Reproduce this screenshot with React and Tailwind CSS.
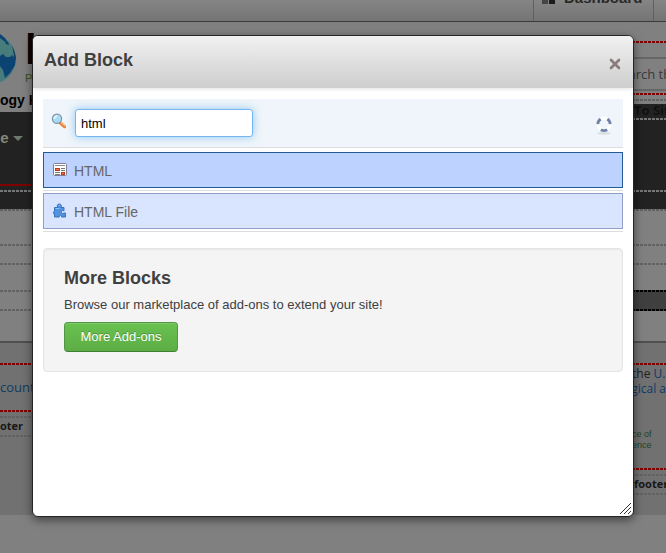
import React, { useState } from "react";

const dashes = {
  red: "h-0.5 shrink-0 bg-[repeating-linear-gradient(90deg,#800000_0_3px,transparent_3px_4px)]",
  gray: "h-0.5 shrink-0 bg-[repeating-linear-gradient(90deg,#626262_0_3px,transparent_3px_4px)]",
  light: "h-0.5 shrink-0 bg-[repeating-linear-gradient(90deg,#777777_0_3px,transparent_3px_4px)]",
  black: "h-0.5 shrink-0 bg-[repeating-linear-gradient(90deg,#000000_0_3px,transparent_3px_4px)]",
};

function Dash({ tone = "gray" }) {
  return <div className={dashes[tone]} />;
}

function Globe() {
  return (
    <svg className="h-[50px] w-[17px] shrink-0" viewBox="0 0 17 50" aria-hidden="true">
      <circle cx="-9" cy="25" r="25" fill="#477b7c" />
      <path d="M0 0L5 4L8 9L4 7L0 4Z M4 6L8 8L9 11L6 10Z M0 22L3 20L6 23L10 23L12 21L14 23L16 21L15 31L10 39L5 44L3 36L0 32Z" fill="#0b4373" />
      <path d="M12 11L15 19L16 27L14 22Z" fill="#173f60" />
    </svg>
  );
}

function TopBar() {
  return (
    <div className="flex h-[22px] justify-end overflow-hidden border-b border-[#3c3c3c] bg-linear-to-b from-[#858585] to-[#747474]">
      <div className="flex w-[121px] items-start border-x border-[#606060] pl-2">
        <svg className="h-4 w-[14px] shrink-0" viewBox="0 0 14 16" aria-hidden="true">
          <path d="M0-2h6v6H0z" fill="#444" />
          <path d="M7-2h6v6H7z" fill="#1c1c1c" />
        </svg>
        <span className="-mt-3 pl-2 text-[15px] leading-5 font-bold text-[#292929]">Dashboard</span>
      </div>
      <div className="w-3" />
    </div>
  );
}

function LeftColumn() {
  return (
    <div className="flex min-w-0 flex-col overflow-hidden whitespace-nowrap">
      <div className="h-[90px] pt-3">
        <div className="flex">
          <Globe />
          <div className="pl-2">
            <div className="text-[42px] leading-8 font-bold text-[#060606]">h</div>
            <div className="pt-1 text-[11px] leading-4 text-[#34501d]">P</div>
          </div>
        </div>
        <div className="mt-1 text-[14px] leading-5 font-bold text-black">ogy K</div>
      </div>
      <div className="flex h-[97px] flex-col bg-[#222222]">
        <div className="flex h-[72px] items-start gap-1 pt-4">
          <span className="-ml-2 text-[15px] leading-5 font-bold text-[#858778]">se</span>
          <svg className="mt-2 h-[5px] w-[10px]" viewBox="0 0 10 5" aria-hidden="true"><path d="M0 0h10L5 5z" fill="#6f786e" /></svg>
        </div>
        <Dash tone="red" />
        <div className="h-1" />
        <Dash tone="light" />
      </div>
      <Dash />
      <div className="h-[33px]" /><Dash />
      <div className="h-[17px]" /><Dash />
      <div className="h-[25px]" /><Dash />
      <div className="h-[17px]" /><Dash />
      <div className="h-[30px]" />
      <div className="h-0.5 bg-[#4f4f4f]" />
      <div className="flex h-[172px] flex-col bg-[#717171]">
        <div className="h-5" /><Dash tone="red" />
        <a href="#account" className="flex h-[45px] items-center font-['Open_Sans',sans-serif] text-[13px] text-[#0e3d60]">count</a>
        <Dash tone="red" />
        <div className="h-1" /><Dash />
        <div className="h-[17px] font-['Open_Sans',sans-serif] text-[11px] leading-4 font-bold text-[#171717]">oter</div>
        <Dash />
      </div>
    </div>
  );
}

function RightColumn() {
  return (
    <div className="flex min-w-0 flex-col overflow-hidden whitespace-nowrap">
      <div className="h-[19px]" /><Dash tone="red" />
      <div className="h-[14px]" />
      <div className="flex h-[34px] items-center border-y-2 border-[#666666] pt-0.5 pl-[14px] font-['Open_Sans',sans-serif] text-[13px] text-[#393939]">Search this</div>
      <div className="h-0.5" /><Dash tone="red" />
      <div className="h-1" /><Dash />
      <div className="h-[3px]" />
      <div className="flex h-[105px] flex-col bg-[#222222]">
        <div className="h-[14px] pl-[34px] font-['Open_Sans',sans-serif] text-[13px] leading-3 font-bold text-[#111111]">To Site</div>
        <Dash tone="light" />
        <div className="h-[70px]" /><Dash tone="light" />
      </div>
      <Dash />
      <div className="h-[33px]" /><Dash />
      <div className="h-[17px]" /><Dash />
      <div className="h-[25px]" />
      <div className="flex h-[21px] flex-col justify-between bg-[#3f3f3f]"><Dash tone="black" /><Dash tone="black" /></div>
      <div className="h-[30px]" />
      <div className="h-0.5 bg-[#4f4f4f]" />
      <div className="flex h-[172px] flex-col bg-[#717171]">
        <div className="h-5" /><Dash tone="red" />
        <div className="h-16 pl-8 font-['Open_Sans',sans-serif] text-[12px] leading-[15px] text-[#202020]">
          <p className="pt-px">the <a href="#usgs" className="text-[#103a66]">U.S.</a></p>
          <a href="#survey" className="-ml-2 text-[#103a66]">ogical and</a>
        </div>
        <p className="h-[39px] pl-8 text-[9px] leading-[11px] text-[#1d4526]">ce of<br />ence</p>
        <Dash tone="red" />
        <div className="h-1" /><Dash />
        <div className="h-[17px] pl-[34px] font-['Open_Sans',sans-serif] text-[11px] leading-4 font-bold text-[#171717]">footer</div>
        <Dash />
      </div>
    </div>
  );
}

function Magnifier() {
  return (
    <svg className="h-4 w-4" viewBox="0 0 16 16" aria-hidden="true">
      <path d="M9.5 10l4 3.6" stroke="#e77c32" strokeWidth="3.2" strokeLinecap="round" />
      <path d="M10 9.5l4.2 3.6" stroke="#ffc078" strokeWidth="1.2" />
      <circle cx="6" cy="5.8" r="4.6" fill="#a8dcf6" stroke="#7d93a8" strokeWidth="1.2" />
      <path d="M3.3 6a3 3 0 0 1 3-3" fill="none" stroke="#e8faff" strokeWidth="1.6" />
    </svg>
  );
}

function PageIcon() {
  return (
    <svg className="h-4 w-4" viewBox="0 0 16 16" aria-hidden="true">
      <rect x="1.5" y="1.5" width="13" height="12" rx="1" fill="#fff" stroke="#837f91" />
      <path d="M3 3h10v1H3z" fill="#8b8b8b" />
      <path d="M3 6h5v3H3zM9 10h4v3H9z" fill="#b83c21" />
      <path d="M4 7h3v1H4zM10 11h2v1h-2z" fill="#e97749" />
      <path d="M9 6.5h4M9 8.5h4M3 10.5h5M3 12.5h5" stroke="#777" />
    </svg>
  );
}

function PuzzleIcon() {
  return (
    <svg className="h-4 w-4" viewBox="0 0 16 16" aria-hidden="true">
      <path d="M2.5 4.5H6C4.5 2.5 5.5 1 7.3 1S10 2.5 8.8 4.5H12v3.3c-2-.8-2.7 0-2.7 1.4s1 2 2.7.8h1.5v4H9.5c1-2.5-3-2.5-2.2 0H2.5v-3C1 11.500 1 8 2.5 8.500z" fill="#5292e0" stroke="#3474bf" />
      <path d="M3.5 5.500h4M6.500 2.400l1.400-.3" stroke="#91c4f5" strokeWidth="1" />
    </svg>
  );
}

function Spinner() {
  return (
    <svg className="h-[19px] w-4" viewBox="0 0 16 19" aria-hidden="true">
      <ellipse cx="8" cy="17.4" rx="6.5" ry="1.2" fill="#d7dce0" />
      <circle cx="8" cy="8" r="6" fill="none" stroke="#fff" strokeWidth="3" />
      <path d="M4.600 3Q2 4.800 1.800 8.200M11.400 3Q14 4.800 14.200 8.200M4.800 13.800q3.200 1.800 6.400 0" fill="none" stroke="#7183aa" strokeWidth="2.8" />
    </svg>
  );
}

function BlockRow({ icon, label, className }) {
  return (
    <li className="border-b border-[#dddddd] pb-0.5">
      <button type="button" className={`flex h-9 w-full items-center gap-1.5 border pl-2 text-left text-[14px] text-[#666666] ${className}`}>
        {icon}
        <span className="pt-0.5">{label}</span>
      </button>
    </li>
  );
}

export default function App() {
  const [query, setQuery] = useState("html");
  return (
    <div className="relative min-h-screen overflow-hidden bg-[#808080] font-['Liberation_Sans',Arial,sans-serif]">
      <TopBar />
      <div className="grid grid-cols-[1fr_66px]">
        <LeftColumn />
        <RightColumn />
      </div>

      <div role="dialog" aria-labelledby="dialog-title" className="absolute inset-x-8 top-[35px] flex h-[482px] flex-col overflow-hidden rounded-md border border-[#252525] bg-white text-[#404040] shadow-[0_3px_10px_rgba(0,0,0,0.5)]">
        <header className="flex h-[52px] shrink-0 items-center justify-between bg-linear-to-b from-[#f1f1f1] to-[#cecece] pr-3 pl-[11px] shadow-[0_1px_4px_rgba(0,0,0,0.12)]">
          <h1 id="dialog-title" className="pb-1 text-[18px] font-bold">Add Block</h1>
          <button type="button" aria-label="Close" className="pt-1">
            <svg className="h-3 w-3" viewBox="0 0 12 12" aria-hidden="true"><path d="M2 2l8 8M10 2l-8 8" stroke="#887b7b" strokeWidth="2.6" strokeLinecap="round" /></svg>
          </button>
        </header>

        <main className="px-[10px] pt-[11px]">
          <div className="flex h-[49px] items-center justify-between border-b border-[#dddddd] bg-[#eff5fa] pr-[11px] pl-2">
            <div className="flex items-center gap-2">
              <label htmlFor="block-search" aria-label="Search blocks" className="pb-1"><Magnifier /></label>
              <input id="block-search" type="text" value={query} onChange={(e) => setQuery(e.target.value)} className="h-7 w-[178px] rounded-[3px] border border-[#75b5f0] bg-white px-[5px] text-[13px] text-black shadow-[0_0_8px_rgba(82,168,236,0.6)] outline-none" />
            </div>
            <div className="pt-1"><Spinner /></div>
          </div>

          <ul className="mt-1 flex flex-col gap-0.5">
            <BlockRow icon={<PageIcon />} label="HTML" className="border-[#235b94] bg-[#bed2ff]" />
            <BlockRow icon={<PuzzleIcon />} label="HTML File" className="border-[#929fc8] bg-[#d9e5ff]" />
          </ul>

          <section className="mt-4 h-[124px] rounded border border-[#e5e5e5] bg-[#f4f4f4] px-5 pt-[17px] shadow-[inset_0_1px_2px_rgba(0,0,0,0.06)]">
            <h2 className="text-[18px] leading-6 font-bold">More Blocks</h2>
            <p className="pt-[5px] text-[13px] leading-5">Browse our marketplace of add-ons to extend your site!</p>
            <button type="button" className="mt-[7px] h-[30px] w-[114px] rounded border border-[#519644] border-b-[#3d8133] bg-linear-to-b from-[#69c250] to-[#5cad46] text-[13px] text-white shadow-[inset_0_1px_0_rgba(255,255,255,0.15)] [text-shadow:0_-1px_0_rgba(0,0,0,0.25)]">More Add-ons</button>
          </section>
        </main>

        <svg className="absolute right-0.5 bottom-0.5 h-3 w-3" viewBox="0 0 12 12" aria-hidden="true"><path d="M1 12L12 1M5 12l7-7M9 12l3-3" stroke="#333" strokeWidth="1" /></svg>
      </div>
    </div>
  );
}
